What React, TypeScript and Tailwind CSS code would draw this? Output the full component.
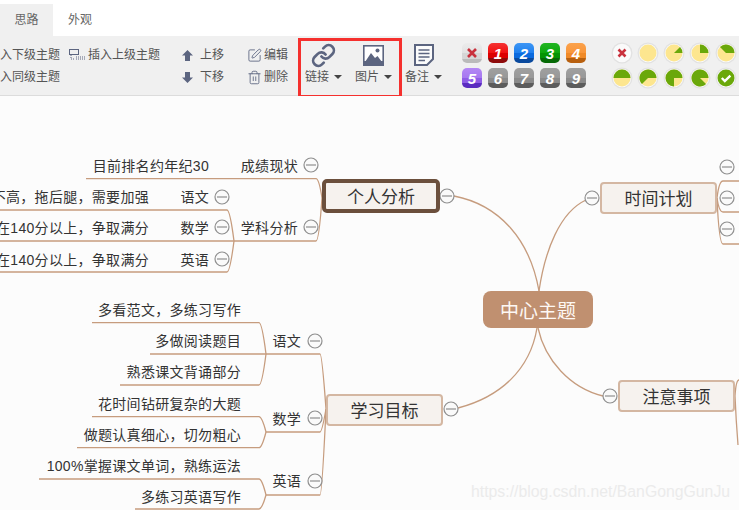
import { Link as LinkIcon, SquarePen, Trash2 } from "lucide-react"

const fontCn = "font-['Liberation_Sans','Noto_Sans_CJK_SC',sans-serif]"

const badges = [
  { label: "", cls: "bg-[linear-gradient(#ececec_0%,#e2e2e2_50%,#d6d6d6_50%,#d6d6d6_80%,#bbbbbb_80%)]" },
  { label: "1", cls: "bg-[linear-gradient(#f53333_0%,#f01010_50%,#dc0000_50%,#dc0000_75%,#8e0c0c_75%)]" },
  { label: "2", cls: "bg-[linear-gradient(#3d96f5_0%,#1f80ee_50%,#0b6ade_50%,#0b6ade_75%,#0a4a9e_75%)]" },
  { label: "3", cls: "bg-[linear-gradient(#22b522_0%,#0da80d_50%,#049404_50%,#049404_75%,#066a06_75%)]" },
  { label: "4", cls: "bg-[linear-gradient(#fba24c_0%,#f9963a_50%,#f08a28_50%,#f08a28_75%,#b8600f_75%)]" },
  { label: "5", cls: "bg-[linear-gradient(#b487f5_0%,#a678f0_50%,#8f5ce6_50%,#8f5ce6_75%,#5a2cc0_75%)]" },
  { label: "6", cls: "bg-[linear-gradient(#a0a0a0_0%,#989898_50%,#8a8a8a_50%,#8a8a8a_75%,#5c5c5c_75%)]" },
  { label: "7", cls: "bg-[linear-gradient(#a0a0a0_0%,#989898_50%,#8a8a8a_50%,#8a8a8a_75%,#5c5c5c_75%)]" },
  { label: "8", cls: "bg-[linear-gradient(#a0a0a0_0%,#989898_50%,#8a8a8a_50%,#8a8a8a_75%,#5c5c5c_75%)]" },
  { label: "9", cls: "bg-[linear-gradient(#a0a0a0_0%,#989898_50%,#8a8a8a_50%,#8a8a8a_75%,#5c5c5c_75%)]" },
]

// left edge of the green wedge, clockwise degrees from 12 o'clock; wedge always ends at 3 o'clock
const progress: (number | "x" | "ok" | "none")[] = ["x", "none", 45, 0, -45, -90, -135, -180, -225, "ok"]

function wedge(start: number) {
  const r = 8.5
  const a = (start * Math.PI) / 180
  const x = 11 + r * Math.sin(a)
  const y = 11 - r * Math.cos(a)
  const large = 90 - start > 180 ? 1 : 0
  return `M11 11 L${x} ${y} A${r} ${r} 0 ${large} 1 19.5 11 Z`
}

function Progress({ value }: { value: number | "x" | "ok" | "none" }) {
  return (
    <svg width="22" height="22" viewBox="0 0 22 22">
      <circle cx="11" cy="11" r="10.5" fill="#e2e2e2" />
      <circle cx="11" cy="11" r="9.2" fill="#fafafa" />
      {value === "x" ? (
        <path d="M7.5 7.5 L14.5 14.5 M14.5 7.5 L7.5 14.5" stroke="#c9313d" strokeWidth="2.6" />
      ) : value === "ok" ? (
        <>
          <circle cx="11" cy="11" r="8.5" fill="#6aa80a" />
          <path d="M6.8 11 L9.8 14 L15.4 8.6" stroke="#fff" strokeWidth="2.4" fill="none" />
        </>
      ) : (
        <>
          <circle cx="11" cy="11" r="8.5" fill="#fde68f" />
          {value !== "none" && <path d={wedge(value)} fill="#6aa80a" />}
        </>
      )}
    </svg>
  )
}

function Caret() {
  return <span className="ml-[5px] inline-block shrink-0 border-x-[4px] border-t-[4px] border-x-transparent border-t-[#444]" />
}

function BigTool({ label, icon, cls }: { label: string; icon: React.ReactNode; cls: string }) {
  return (
    <div className={`flex w-[37px] shrink-0 flex-col items-center ${cls}`}>
      <div className="flex h-[24px] items-center">{icon}</div>
      <div className="mt-[1px] flex h-[18px] items-center whitespace-nowrap text-[12px] text-[#555]">
        {label}
        <Caret />
      </div>
    </div>
  )
}

function Toolbar() {
  return (
    <div className="flex h-[60px] border-b border-[#dcdcdc] bg-[#f0f0f0] pt-[7px] text-[12px] text-[#555]">
      <div className="mt-[1px] flex w-[69px] flex-col">
        <div className="flex h-[22px] items-center">入下级主题</div>
        <div className="flex h-[22px] items-center">入同级主题</div>
      </div>
      <div className="mt-[1px] flex h-[22px] w-[112px] items-center">
        <svg width="17" height="12" viewBox="0 0 17 12" className="mr-[2px]">
          <rect x="0.5" y="0.5" width="9" height="5" fill="none" stroke="#5c6580" />
          <path d="M2 6 V10 H5 M7 8 H17 M7 10 H17" stroke="#5c6580" strokeDasharray="1 1" fill="none" />
        </svg>
        插入上级主题
      </div>
      <div className="mt-[1px] w-[66px] pl-[1px]">
        <div className="flex h-[22px] items-center gap-[7px]">
          <svg width="11" height="11" viewBox="0 0 11 11">
            <path d="M5.5 0 L11 5.5 H8 V11 H3 V5.5 H0 Z" fill="#5c6580" />
          </svg>
          上移
        </div>
        <div className="flex h-[22px] items-center gap-[7px]">
          <svg width="11" height="11" viewBox="0 0 11 11">
            <path d="M5.5 11 L11 5.5 H8 V0 H3 V5.5 H0 Z" fill="#5c6580" />
          </svg>
          下移
        </div>
      </div>
      <div className="mt-[1px] w-[51px]">
        <div className="flex h-[22px] items-center gap-[2px]">
          <SquarePen size={15} color="#5c6580" strokeWidth={1.4} />
          编辑
        </div>
        <div className="flex h-[22px] items-center gap-[2px]">
          <Trash2 size={15} color="#5c6580" strokeWidth={1.4} />
          删除
        </div>
      </div>
      <div className="-mt-[5px] flex h-[60px] w-[104px] shrink-0 border-[3px] border-[#f5302e] pt-[2px]">
        <BigTool
          label="链接"
          cls="ml-[4px]"
          icon={<LinkIcon size={25} color="#5c6580" strokeWidth={2.6} />}
        />
        <BigTool
          label="图片"
          cls="ml-[13px]"
          icon={
            <svg width="21" height="21" viewBox="0 0 21 21">
              <rect x="0.8" y="0.8" width="19.4" height="19.4" fill="#fff" stroke="#5c6580" strokeWidth="1.6" />
              <rect x="0" y="16" width="21" height="5" fill="#5c6580" />
              <path d="M2 17 L8 8 L12 13 L14.5 11 L19 17 Z" fill="#5c6580" />
              <circle cx="14.5" cy="5.5" r="2" fill="#5c6580" />
            </svg>
          }
        />
      </div>
      <BigTool
        label="备注"
        cls="ml-[3px]"
        icon={
          <svg width="20" height="22" viewBox="0 0 20 22">
            <path d="M1 1 H19 V15 L13 21 H1 Z" fill="#fbfbfb" stroke="#5c6580" strokeWidth="2" />
            <path d="M4.5 6 H15.5 M4.5 9.5 H15.5 M4.5 13 H15.5 M4.5 16.5 H11" stroke="#5c6580" strokeWidth="1.5" />
          </svg>
        }
      />
      <div className="ml-[20px] grid h-[45px] grid-cols-[repeat(5,20px)] grid-rows-[20px_20px] gap-x-[6px] gap-y-[5px]">
        {badges.map((b, i) => (
          <div
            key={i}
            className={`flex items-center justify-center rounded-[5px] font-['Liberation_Sans',sans-serif] text-[15px] font-bold italic leading-none text-white ${b.cls}`}
          >
            {b.label || (
              <svg width="10" height="10" viewBox="0 0 10 10">
                <path d="M1 1 L9 9 M9 1 L1 9" stroke="#c9313d" strokeWidth="2.6" />
              </svg>
            )}
          </div>
        ))}
      </div>
      <div className="ml-[25px] -mt-[1px] grid h-[47px] grid-cols-[repeat(5,22px)] grid-rows-[22px_22px] gap-x-[4px] gap-y-[3px]">
        {progress.map((v, i) => (
          <Progress key={i} value={v} />
        ))}
      </div>
    </div>
  )
}

// everything on the map is in page coordinates; canvas starts at y = 96
const OFFSET = 96

const links = [
  "M86 178.7 H316 Q319 178.7 322 198",
  "M0 241 H316 Q319 241 322 198",
  "M0 210 H227 Q230 210 234 241",
  "M0 272 H227 Q230 272 234 241",
  "M92 322.7 H259 Q262 322.7 266 354",
  "M120 385 H259 Q262 385 266 354",
  "M150 354 H320 Q322 354 326 409",
  "M92 416.7 H259 Q262 416.7 266 432",
  "M77 447.7 H259 Q262 447.7 266 432",
  "M266 432 H320 Q322 432 326 409",
  "M39 479 H259 Q262 479 266 495",
  "M135 509 H259 Q262 509 266 495",
  "M266 495 H320 Q322 495 326 409",
  "M539 291 C530 240 500 205 454 196",
  "M539 291 C545 250 560 212 586 200",
  "M537 328 C530 370 500 397 458 408",
  "M538 328 C545 360 570 388 603 396",
  "M717 198 Q719 181 723 181 H739",
  "M717 198 Q719 212 723 212 H739",
  "M717 198 Q719 244 723 244 H739",
  "M735 396 Q736 380 739 380",
  "M735 396 Q736 420 738 445",
]

const minus = [
  [311, 165], [311, 227], [222, 197], [222, 227], [222, 259], [447, 196],
  [315, 341], [315, 418], [315, 481], [451, 409],
  [592, 198], [727, 167], [727, 198], [727, 229], [610, 396],
]

// [text, right edge, vertical centre]
const labels: [string, number, number][] = [
  ["目前排名约年纪30", 209, 166],
  ["成绩现状", 298, 166],
  ["成绩不高，拖后腿，需要加强", 149, 197],
  ["语文", 209, 197],
  ["数学在140分以上，争取满分", 149, 228],
  ["数学", 209, 228],
  ["学科分析", 298, 228],
  ["英语在140分以上，争取满分", 149, 260],
  ["英语", 209, 260],
  ["多看范文，多练习写作", 241, 310],
  ["多做阅读题目", 241, 341],
  ["熟悉课文背诵部分", 241, 372],
  ["语文", 301, 341],
  ["花时间钻研复杂的大题", 241, 404],
  ["做题认真细心，切勿粗心", 241, 435],
  ["数学", 301, 419],
  ["100%掌握课文单词，熟练运法", 241, 466],
  ["多练习英语写作", 241, 497],
  ["英语", 301, 481],
]

const topics: [string, number, number, number, number, string][] = [
  ["个人分析", 322, 179, 118, 34, "border-[4px] border-[#6b4f3c] rounded-[5px]"],
  ["时间计划", 600, 182, 117, 32, "border-2 border-[#d4b7a2] rounded-[4px]"],
  ["学习目标", 326, 394, 117, 32, "border-2 border-[#d4b7a2] rounded-[4px]"],
  ["注意事项", 618, 380, 117, 32, "border-2 border-[#d4b7a2] rounded-[4px]"],
]

function MindMap() {
  return (
    <div className="relative h-[414px] overflow-hidden bg-[#fcfcfc]">
      <svg width="739" height="414" viewBox={`0 ${OFFSET} 739 414`} className="absolute inset-0">
        {links.map((d, i) => (
          <path key={i} d={d} fill="none" stroke="#c69c7e" strokeWidth="1.3" />
        ))}
        {minus.map(([x, y], i) => (
          <g key={i}>
            <circle cx={x} cy={y} r="7" fill="#fafafa" stroke="#8f8f8f" strokeWidth="1.2" />
            <path d={`M${x - 5} ${y} H${x + 5}`} stroke="#8f8f8f" strokeWidth="1.2" />
          </g>
        ))}
      </svg>

      {labels.map(([text, right, y], i) => (
        <div
          key={i}
          className="absolute whitespace-nowrap text-[14px] leading-[20px] tracking-[0.3px] text-[#333]"
          style={{ right: 739 - right, top: y - OFFSET - 10 }}
        >
          {text}
        </div>
      ))}

      {topics.map(([text, x, y, w, h, cls]) => (
        <div
          key={text}
          className={`absolute flex items-center justify-center bg-[#f6f2ee] pt-[4px] text-[17px] leading-[20px] text-[#333] ${cls}`}
          style={{ left: x, top: y - OFFSET, width: w, height: h }}
        >
          {text}
        </div>
      ))}

      <div className="absolute left-[483px] top-[195px] flex h-[37px] w-[110px] items-center justify-center rounded-[8px] bg-[#c09070] pt-[4px] text-[19px] leading-[22px] text-[#fdf8f4]">
        中心主题
      </div>

      <div className="absolute left-[471px] top-[387px] whitespace-nowrap font-['Liberation_Sans',sans-serif] text-[15.8px] leading-[18px] text-[#ebebeb]">
        https://blog.csdn.net/BanGongGunJu
      </div>
    </div>
  )
}

export default function App() {
  return (
    <div className={`h-[510px] w-[739px] overflow-hidden bg-white ${fontCn}`}>
      <div className="flex h-[36px] text-[12px] text-[#666]">
        <div className="mt-[4px] flex w-[53px] items-center justify-center bg-[#f0f0f0]">思路</div>
        <div className="mt-[4px] flex w-[54px] items-center justify-center">外观</div>
      </div>
      <Toolbar />
      <MindMap />
    </div>
  )
}
